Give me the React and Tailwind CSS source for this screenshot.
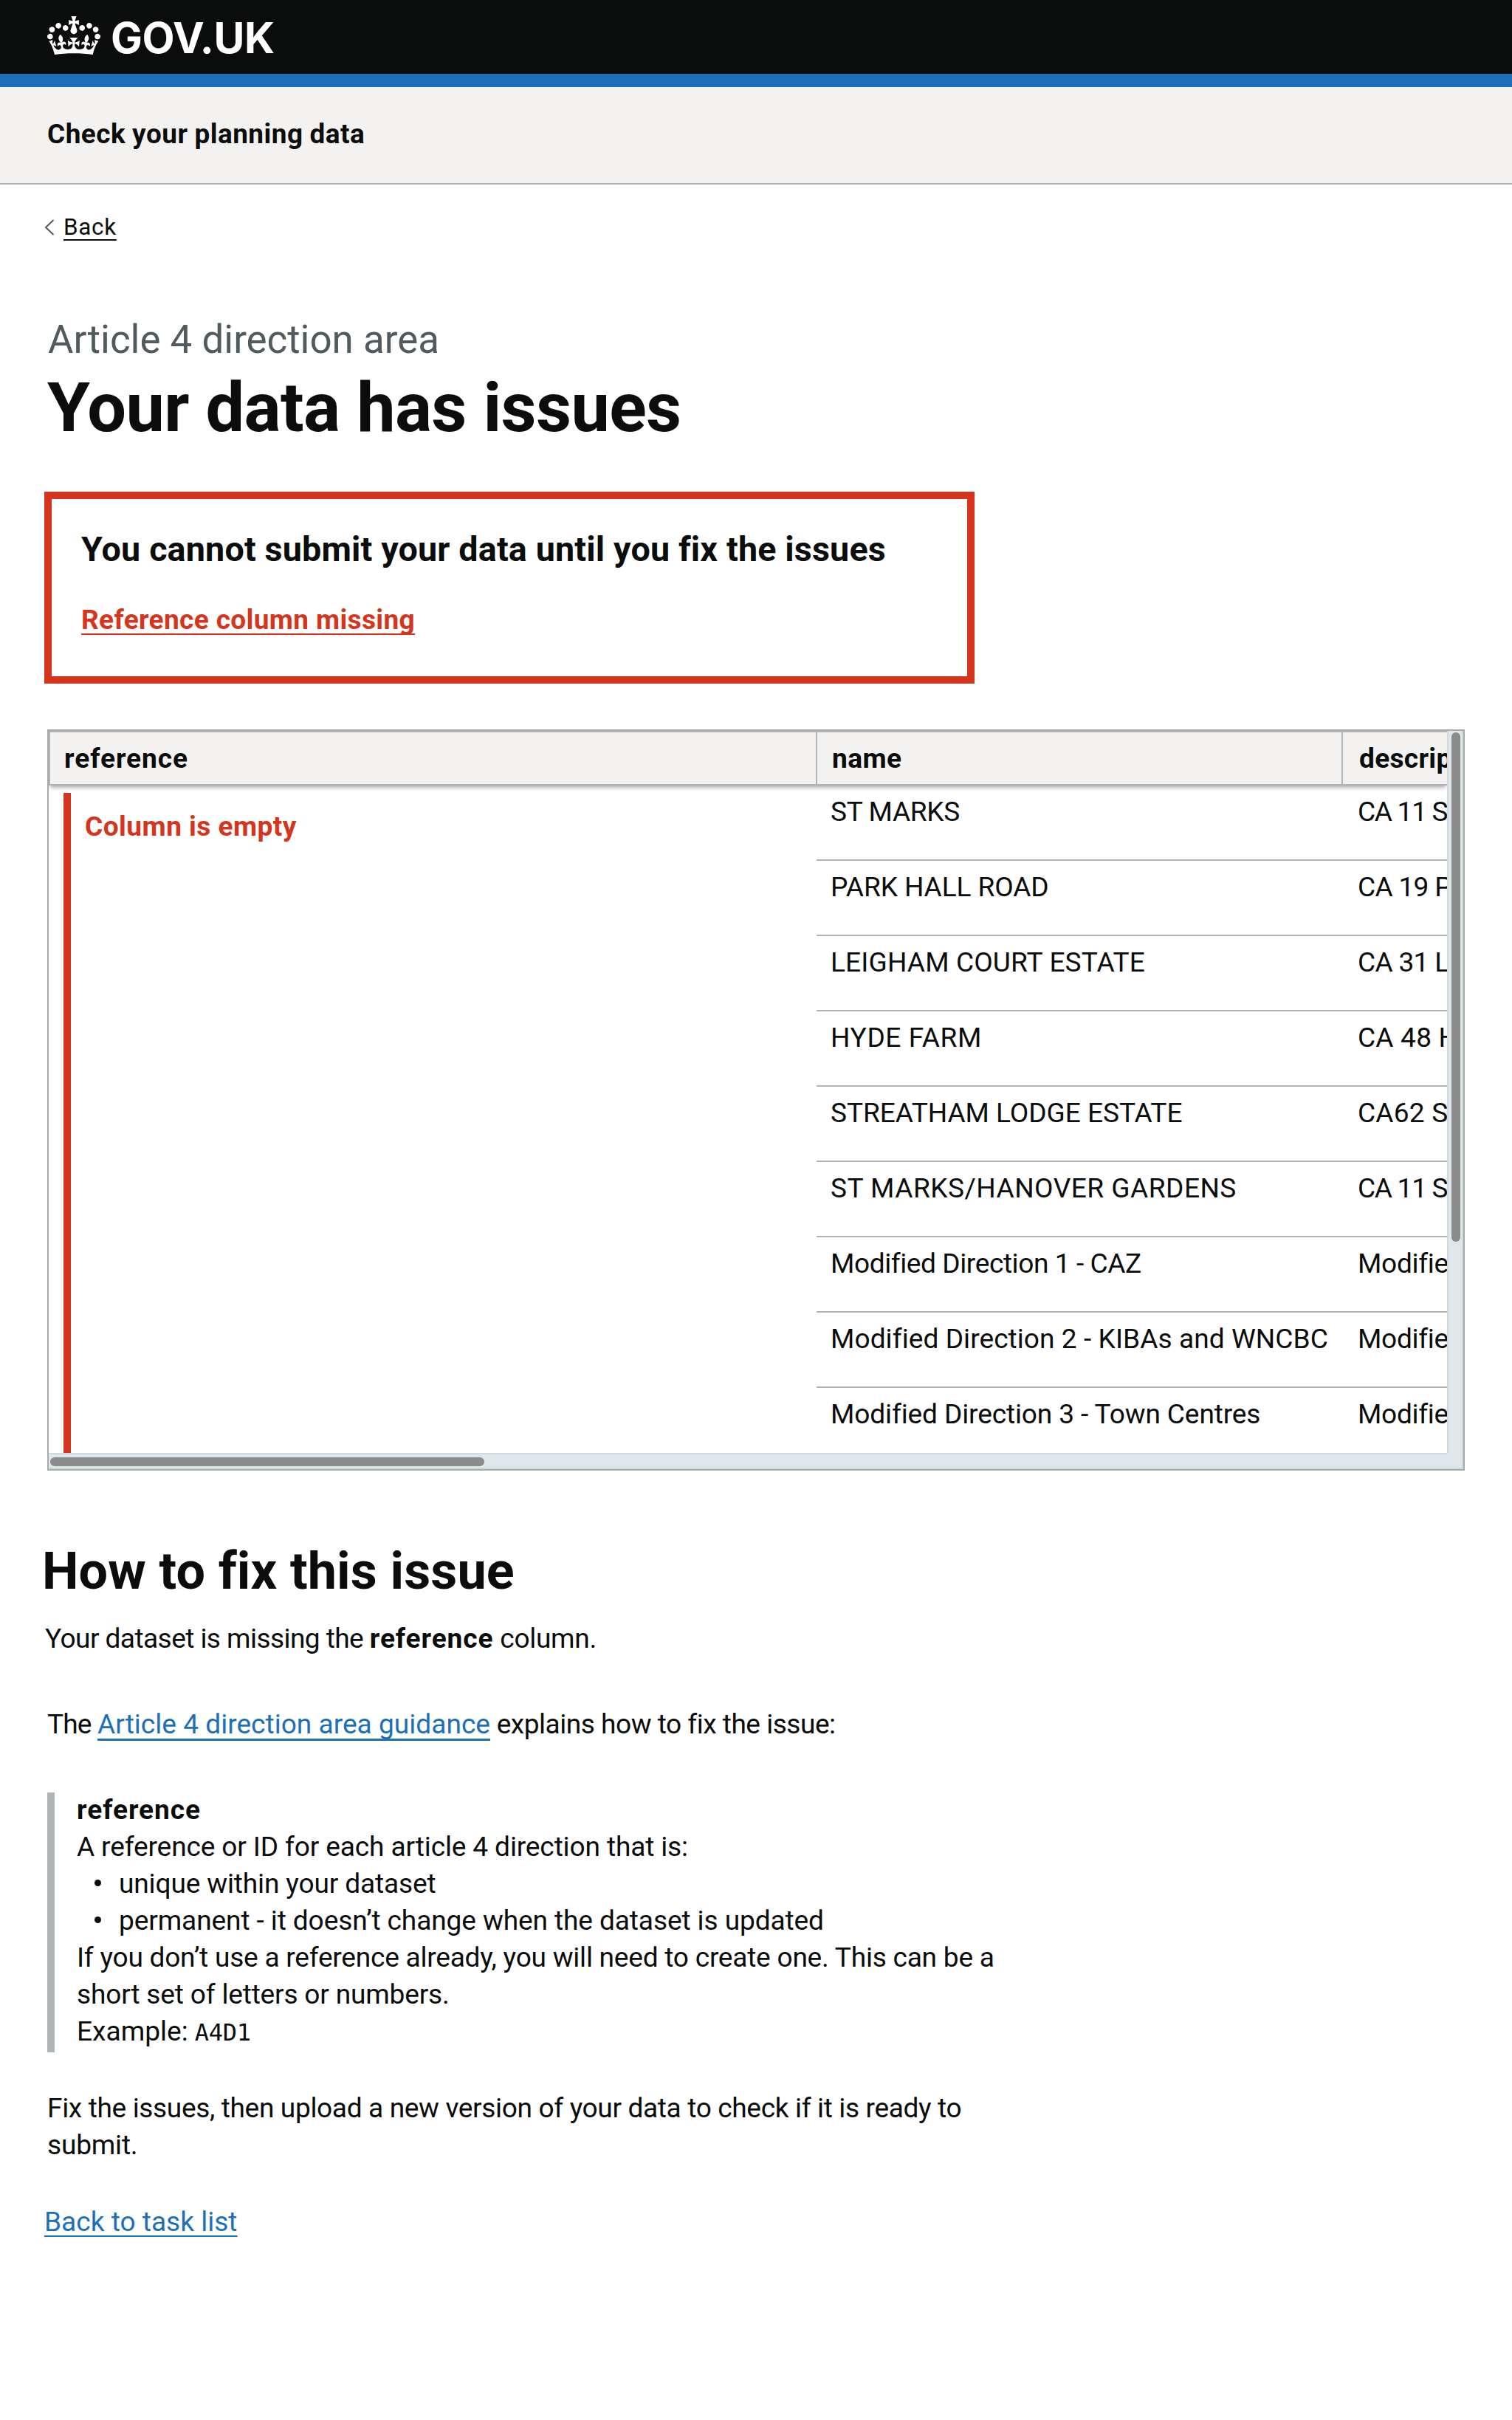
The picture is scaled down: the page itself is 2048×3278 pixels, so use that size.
import React from 'react';

const CROWN =
  'M25 30.2c3.5 1.5 7.7-.2 9.1-3.7 1.5-3.6-.2-7.8-3.9-9.2-3.6-1.4-7.6.3-9.1 3.9-1.4 3.5.3 7.5 3.9 9zM9 39.5c3.6 1.5 7.8-.2 9.2-3.7 1.5-3.6-.2-7.8-3.9-9.1-3.6-1.5-7.6.2-9.1 3.8-1.4 3.5.3 7.5 3.8 9zM4.4 57.2c3.5 1.5 7.7-.2 9.1-3.8 1.5-3.6-.2-7.7-3.9-9.1-3.5-1.5-7.6.3-9.1 3.8-1.4 3.5.3 7.6 3.9 9.1zm38.3-21.4c3.5 1.5 7.7-.2 9.1-3.8 1.5-3.6-.2-7.7-3.9-9.1-3.6-1.5-7.6.3-9.1 3.8-1.3 3.6.4 7.7 3.9 9.1zm64.4-5.6c-3.6 1.5-7.8-.2-9.1-3.7-1.5-3.6.2-7.8 3.8-9.2 3.6-1.4 7.7.3 9.2 3.9 1.3 3.5-.4 7.5-3.9 9zm15.9 9.3c-3.6 1.5-7.7-.2-9.1-3.7-1.5-3.6.2-7.8 3.7-9.1 3.6-1.5 7.7.2 9.2 3.8 1.5 3.5-.3 7.5-3.8 9zm4.7 17.7c-3.6 1.5-7.8-.2-9.2-3.8-1.5-3.6.2-7.7 3.9-9.1 3.6-1.5 7.7.3 9.2 3.8 1.3 3.5-.4 7.6-3.9 9.1zM89.3 35.8c-3.6 1.5-7.8-.2-9.2-3.8-1.4-3.6.2-7.7 3.9-9.1 3.6-1.5 7.7.3 9.2 3.8 1.4 3.6-.3 7.7-3.9 9.1zM69.7 17.7l8.9 4.7V9.3l-8.9 2.8c-.2-.3-.5-.6-.9-.9L72.4 0H59.6l3.5 11.2c-.3.3-.6.5-.9.9l-8.8-2.8v13.1l8.8-4.7c.3.3.6.7.9.9l-5 15.4v.1c-.2.8-.4 1.6-.4 2.4 0 4.1 3.1 7.5 7 8.1h.2c.3 0 .7.1 1 .1.4 0 .7 0 1-.1h.2c4-.6 7.1-4.1 7.1-8.1 0-.8-.1-1.7-.4-2.4V34l-5.1-15.4c.4-.2.7-.6 1-.9zM66 92.8c16.9 0 32.8 1.1 47.1 3.2 4-16.9 8.9-26.7 14-33.5l-9.6-3.4c1 4.9 1.1 7.2 0 10.2-1.5-1.4-3-4.3-4.2-8.7L108.6 76c2.8-2 5-3.2 7.5-3.3-4.4 9.4-10 11.9-13.6 11.2-4.3-.8-6.3-4.6-5.6-7.9 1-4.7 5.7-5.9 8-.5 4.3-8.7-3-11.4-7.6-8.8 7.1-7.2 7.9-13.5 2.1-21.1-8 6.1-8.1 12.3-4.5 20.8-4.7-5.4-12.1-2.5-9.5 6.2 3.4-5.2 7.9-2 7.2 3.1-.6 4.3-6.4 7.8-13.5 7.2-10.3-.9-10.9-8-11.2-13.8 2.5-.5 7.1 1.8 11 7.3L80.2 60c-4.1 4.4-8 5.3-12.3 5.4 1.4-4.4 8-11.6 8-11.6H55.5s6.4 7.2 7.9 11.6c-4.2-.1-8-1-12.3-5.4l1.4 16.4c3.9-5.5 8.5-7.7 10.9-7.3-.3 5.8-.9 12.8-11.1 13.8-7.2.6-12.9-2.9-13.5-7.2-.7-5 3.8-8.3 7.1-3.1 2.7-8.7-4.6-11.6-9.4-6.2 3.7-8.5 3.6-14.7-4.6-20.8-5.8 7.6-5 13.9 2.2 21.1-4.7-2.6-11.9.1-7.7 8.8 2.3-5.5 7.1-4.2 8.1.5.7 3.3-1.3 7.1-5.7 7.9-3.5.7-9-1.8-13.5-11.2 2.5.1 4.7 1.3 7.5 3.3l-4.7-15.4c-1.2 4.4-2.7 7.2-4.3 8.7-1.1-3-.9-5.3 0-10.2l-9.5 3.4c5 6.9 9.9 16.7 14 33.5 14.8-2.1 30.8-3.2 47.7-3.2z';

const LINK = 'underline decoration-2 underline-offset-[6px] [text-decoration-skip-ink:none]';

const ROWS = [
  { name: 'ST MARKS', description: 'CA 11 ST MARKS', tracking: 'tracking-[-0.33px]', descriptionTracking: 'tracking-[-1.3px]' },
  { name: 'PARK HALL ROAD', description: 'CA 19 PARK HALL ROAD', tracking: 'tracking-[-0.1px]', descriptionTracking: 'tracking-[-0.7px]' },
  { name: 'LEIGHAM COURT ESTATE', description: 'CA 31 LEIGHAM COURT ESTATE', tracking: 'tracking-[0.13px]', descriptionTracking: 'tracking-[-0.7px]' },
  { name: 'HYDE FARM', description: 'CA 48 HYDE FARM', tracking: 'tracking-[0.6px]', descriptionTracking: 'tracking-[0.2px]' },
  { name: 'STREATHAM LODGE ESTATE', description: 'CA62 STREATHAM LODGE ESTATE', tracking: 'tracking-[-0.05px]', descriptionTracking: 'tracking-[0.2px]' },
  { name: 'ST MARKS/HANOVER GARDENS', description: 'CA 11 ST MARKS', tracking: 'tracking-[0.48px]', descriptionTracking: 'tracking-[-1.3px]' },
  { name: 'Modified Direction 1 - CAZ', description: 'Modified Direction', tracking: 'tracking-[-0.42px]', descriptionTracking: 'tracking-[-0.3px]' },
  { name: 'Modified Direction 2 - KIBAs and WNCBC', description: 'Modified Direction', tracking: 'tracking-[0.06px]', descriptionTracking: 'tracking-[-0.3px]' },
  { name: 'Modified Direction 3 - Town Centres', description: 'Modified Direction', tracking: 'tracking-[-0.13px]', descriptionTracking: 'tracking-[-0.3px]' },
];

function Header() {
  return (
    <header>
      <div className="flex h-[100px] bg-[#0b0c0c] pl-16 text-white">
        <svg className="mt-[22px] h-[52.5px] w-[72px]" viewBox="0 0 132 97" preserveAspectRatio="none" fill="currentColor">
          <path d={CROWN} />
        </svg>
        <span className="mt-[17px] ml-[14px] h-[69px] font-['Inter',sans-serif] text-[57.2px] leading-[69px] font-bold tracking-[-0.35px]">
          GOV.UK
        </span>
      </div>
      <div className="h-[18px] bg-[#1d70b8]" />
      <div className="h-[132px] border-b-2 border-[#b1b4b6] bg-[#f3f2f1] pt-[42px] pl-16 text-[36.9px] leading-[43px] font-bold tracking-[0.5px] [word-spacing:-0.7px]">
        Check your planning data
      </div>
    </header>
  );
}

function BackLink() {
  return (
    <div className="mt-[39px] flex h-[37px] pl-[60px] text-[31.4px] leading-[37px]">
      <svg className="mt-2 h-[22px] w-[14px]" viewBox="0 0 14 22" fill="none" stroke="#505a5f" strokeWidth="2">
        <path d="M12.5 1 2 11l10.5 10" />
      </svg>
      <a className={`ml-3 tracking-[0.7px] ${LINK}`}>Back</a>
    </div>
  );
}

function ErrorSummary() {
  return (
    <div className="mt-[59px] ml-[60px] h-[260px] w-[1260px] border-10 border-[#d4351c] pt-[41px] pl-10">
      <h2 className="text-[46.7px] leading-[54px] font-bold tracking-[0.15px]">
        You cannot submit your data until you fix the issues
      </h2>
      <p className="mt-[47px] text-[37.1px] leading-[43px] font-bold tracking-[0.34px] text-[#d4351c]">
        <a className={LINK}>Reference column missing</a>
      </p>
    </div>
  );
}

function DataTable() {
  return (
    <div className="mt-[62px] ml-16 grid h-[1004px] w-[1920px] grid-cols-[1894px_22px] grid-rows-[978px_22px] border-2 border-[#a9a9a9] bg-[#dfe7ea]">
      <div className="flex flex-col overflow-hidden bg-white text-[37.1px] leading-[43px] whitespace-nowrap">
        <div className="z-10 flex h-[74px] shrink-0 border-y-2 border-[#b1b4b6] bg-[#f3f2f1] font-bold shadow-[0_4px_6px_-2px_rgba(0,0,0,0.4)]">
          <div className="w-[1039px] shrink-0 border-l-2 border-[#b1b4b6] pt-3.5 pl-[19px] tracking-[0.95px]">reference</div>
          <div className="w-[712px] shrink-0 border-l-2 border-[#b1b4b6] pt-3.5 pl-5 tracking-[0.4px]">name</div>
          <div className="shrink-0 border-l-2 border-[#b1b4b6] pt-3.5 pl-[22px] tracking-[0.3px]">description</div>
        </div>
        <div className="flex min-h-0 grow">
          <div className="w-[1040px] shrink-0 pt-2.5 pl-5">
            <div className="h-full border-l-10 border-[#d4351c] pt-6 pl-[19px] font-bold tracking-[0.45px] text-[#d4351c]">
              Column is empty
            </div>
          </div>
          <div className="grow">
            {ROWS.map((row) => (
              <div key={row.name} className="flex h-[102px] border-b-2 border-[#b1b4b6] pt-3.5 pl-[19px]">
                <div className={`w-[714px] shrink-0 ${row.tracking}`}>{row.name}</div>
                <div className={row.descriptionTracking}>{row.description}</div>
              </div>
            ))}
          </div>
        </div>
      </div>
      <div className="border-x-2 border-[#d0dadc] pt-0.5 pl-1">
        <div className="h-[690px] w-3 rounded-full bg-[#8b8b8b]" />
      </div>
      <div className="border-y-2 border-[#d0dadc] pt-1 pl-0.5">
        <div className="h-3 w-[588px] rounded-full bg-[#8b8b8b]" />
      </div>
      <div className="border-r-2 border-b-2 border-[#d0dadc]" />
    </div>
  );
}

function Line({ className = '', children }) {
  return <span className={`block h-[50px] leading-[49px] whitespace-nowrap ${className}`}>{children}</span>;
}

function Bullet({ className, children }) {
  return (
    <li className="flex h-[50px] leading-[49px] whitespace-nowrap">
      <span className="mt-[19px] ml-6 size-[9px] rounded-full bg-[#0b0c0c]" />
      <span className={`ml-6 ${className}`}>{children}</span>
    </li>
  );
}

function Guidance() {
  return (
    <div className="mt-[71px] ml-16 h-[352px] border-l-10 border-[#b1b4b6] pl-[30px]">
      <div className="-translate-y-px">
        <Line className="font-bold tracking-[0.95px]">reference</Line>
        <Line className="tracking-[-0.14px]">A reference or ID for each article 4 direction that is:</Line>
        <ul>
          <Bullet className="tracking-[-0.15px]">unique within your dataset</Bullet>
          <Bullet className="tracking-[-0.11px]">permanent - it doesn’t change when the dataset is updated</Bullet>
        </ul>
        <p>
          <Line className="tracking-[-0.24px]">
            If you don’t use a reference already, you will need to create one. This can be a{' '}
          </Line>
          <Line className="tracking-[-0.19px]">short set of letters or numbers.</Line>
        </p>
        <Line>
          Example: <code className="font-['DejaVu_Sans_Mono',monospace] text-[32px] tracking-[-0.3px]">A4D1</code>
        </Line>
      </div>
    </div>
  );
}

export default function App() {
  return (
    <div className="min-h-[3278px] bg-white font-['Roboto',sans-serif] text-[37.1px] text-[#0b0c0c]">
      <Header />
      <BackLink />
      <main>
        <p className="mt-[103px] pl-[65px] text-[52.9px] leading-[62px] text-[#505a5f]">Article 4 direction area</p>
        <h1 className="mt-1.5 pl-16 text-[93.5px] leading-[110px] font-bold tracking-[-0.6px]">Your data has issues</h1>
        <ErrorSummary />
        <DataTable />
        <h2 className="mt-[95px] pl-[57px] text-[70.1px] leading-[82px] font-bold tracking-[0.13px]">How to fix this issue</h2>
        <p className="mt-[29px] pl-[61px] leading-[43px] tracking-[-0.58px]">
          Your dataset is missing the <b className="tracking-[0.9px]">reference</b>
          <span className="tracking-[-0.3px]"> column.</span>
        </p>
        <p className="mt-[73px] pl-16 leading-[43px] tracking-[-0.5px]">
          <span className="tracking-[-0.85px]">The </span>
          <a className="tracking-[0.01px] text-[#1d70b8] underline decoration-[3px] underline-offset-[7px] [text-decoration-skip-ink:none]">
            Article 4 direction area guidance
          </a>{' '}
          explains how to fix the issue:
        </p>
        <Guidance />
        <p className="mt-[51px] pl-16">
          <Line className="tracking-[-0.36px]">
            Fix the issues, then upload a new version of your data to check if it is ready to{' '}
          </Line>
          <Line className="tracking-[-0.2px]">submit.</Line>
        </p>
        <p className="mt-[57px] pl-[60px] leading-[43px]">
          <a className={`text-[#1d70b8] ${LINK}`}>Back to task list</a>
        </p>
      </main>
    </div>
  );
}
